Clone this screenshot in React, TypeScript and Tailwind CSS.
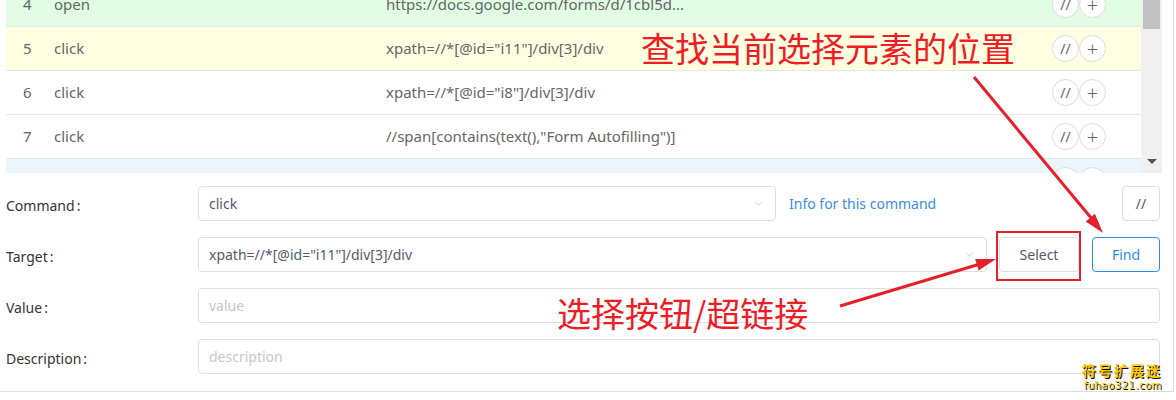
import { ChevronDown } from "lucide-react";

const rows = [
  { n: 4, cmd: "open", target: "https://docs.google.com/forms/d/1cbl5d...", bg: "bg-[#e0fde4]" },
  { n: 5, cmd: "click", target: 'xpath=//*[@id="i11"]/div[3]/div', bg: "bg-[#ffffe1]" },
  { n: 6, cmd: "click", target: 'xpath=//*[@id="i8"]/div[3]/div', bg: "bg-white" },
  { n: 7, cmd: "click", target: '//span[contains(text(),"Form Autofilling")]', bg: "bg-white" },
  { n: 8, cmd: "", target: "", bg: "bg-[#eaf5fc]" },
];

function RoundBtn({ children, big }: { children: React.ReactNode; big?: boolean }) {
  return (
    <span
      className={`flex h-[27px] w-[27px] items-center justify-center rounded-full border border-[#dcdcdc] bg-white text-[#666] ${
        big ? "text-[20px] font-light" : "text-[14px]"
      }`}
    >
      {children}
    </span>
  );
}

function Label({ text }: { text: string }) {
  return (
    <div className="w-[198px] shrink-0 pt-[3px] pl-[6px] text-[14px] text-[#333]">
      {text}
      <span className="ml-[2px]">:</span>
    </div>
  );
}

export default function App() {
  return (
    <div className="relative h-[400px] w-[1176px] overflow-hidden bg-white font-['Noto_Sans','Noto_Sans_CJK_SC',sans-serif]">
      <div className="h-[392px] w-[1174px] border-r border-b border-[#dddddd]">
        {/* command list */}
        <div className="flex h-[173px]">
          <div className="ml-[6px] w-[1135px] overflow-hidden">
            <div className="mt-[-17px]">
              {rows.map((r) => (
                <div
                  key={r.n}
                  className={`flex h-[44px] items-center border-b border-[#e6e6e6] text-[15px] text-[#666] ${r.bg}`}
                >
                  <div className="w-[48px] shrink-0 pl-[17px]">{r.n !== 8 ? r.n : ""}</div>
                  <div className="w-[332px] shrink-0">{r.cmd}</div>
                  <div className="flex-1 truncate">{r.target}</div>
                  <div className="mr-[35px] flex">
                    <RoundBtn>//</RoundBtn>
                    <RoundBtn big>+</RoundBtn>
                  </div>
                </div>
              ))}
            </div>
          </div>
          <div className="relative w-[21px] bg-[#f0f0f0]">
            <div className="ml-[2px] h-[29px] w-[17px] bg-[#c1c1c1]" />
            <div className="absolute bottom-[9px] left-[6px] h-0 w-0 border-x-[5px] border-t-[5px] border-x-transparent border-t-[#505050]" />
          </div>
        </div>

        {/* form */}
        <div className="mt-[13px] flex flex-col gap-[16px] pr-[13px] text-[14px]">
          <div className="flex items-center">
            <Label text="Command" />
            <div className="flex h-[35px] w-[578px] items-center justify-between rounded-[4px] border border-[#dcdee2] px-[10px] text-[#515a6e]">
              <span>click</span>
              <ChevronDown size={13} strokeWidth={1} className="text-[#b0b0b0]" />
            </div>
            <a className="ml-[13px] text-[#3a8ee6]">Info for this command</a>
            <div className="flex-1" />
            <button className="flex h-[35px] w-[38px] items-center justify-center rounded-[4px] border border-[#dcdee2] text-[#515a6e]">
              //
            </button>
          </div>

          <div className="flex items-center">
            <Label text="Target" />
            <div className="flex h-[35px] w-[789px] items-center justify-between rounded-[4px] border border-[#dcdee2] px-[10px] text-[#515a6e]">
              <span>xpath=//*[@id="i11"]/div[3]/div</span>
              <ChevronDown size={13} strokeWidth={1} className="text-[#b0b0b0]" />
            </div>
            <button className="ml-[12px] h-[35px] w-[80px] rounded-[4px] border border-[#dcdee2] text-[#515a6e]">
              Select
            </button>
            <button className="ml-[13px] h-[35px] w-[68px] rounded-[4px] border border-[#2d8cf0] text-[#2d8cf0]">
              Find
            </button>
          </div>

          <div className="flex items-center">
            <Label text="Value" />
            <div className="flex h-[35px] flex-1 items-center rounded-[4px] border border-[#dcdee2] px-[10px] text-[#c5c8ce]">
              value
            </div>
          </div>

          <div className="flex items-center">
            <Label text="Description" />
            <div className="flex h-[35px] flex-1 items-center rounded-[4px] border border-[#dcdee2] px-[10px] text-[#c5c8ce]">
              description
            </div>
          </div>
        </div>
      </div>

      {/* annotations */}
      <div className="absolute top-[31px] left-[641px] text-[34px] leading-none whitespace-nowrap text-[#ee1c25] font-['Noto_Sans_CJK_SC',sans-serif]">
        查找当前选择元素的位置
      </div>
      <div className="absolute top-[296px] left-[557px] text-[34px] leading-none whitespace-nowrap text-[#ee1c25] font-['Noto_Sans_CJK_SC',sans-serif]">
        选择按钮/超链接
      </div>
      <div className="absolute top-[231px] left-[996px] h-[50px] w-[85px] border-2 border-[#e5202a]" />
      <svg className="pointer-events-none absolute inset-0" width="1176" height="400">
        <line x1="974" y1="77" x2="1092" y2="219" stroke="#e5202a" strokeWidth="3" />
        <polygon points="1103,233 1085.7,221.4 1094.9,213.8" fill="#e5202a" />
        <line x1="840" y1="306" x2="980" y2="264" stroke="#e5202a" strokeWidth="3" />
        <polygon points="996,259 978.6,270.5 975.2,259.1" fill="#e5202a" />
      </svg>

      {/* watermark */}
      <div className="absolute right-[14px] bottom-[9px] flex flex-col items-end leading-none text-[#ffc800] [text-shadow:1px_1px_0_#000]">
        <span className="text-[14px] font-bold tracking-[2px] font-['Noto_Sans_CJK_SC',sans-serif]">符号扩展迷</span>
        <span className="mt-[4px] text-[10px] tracking-[0.5px] font-['DejaVu_Sans',sans-serif]">fuhao321.com</span>
      </div>
    </div>
  );
}
